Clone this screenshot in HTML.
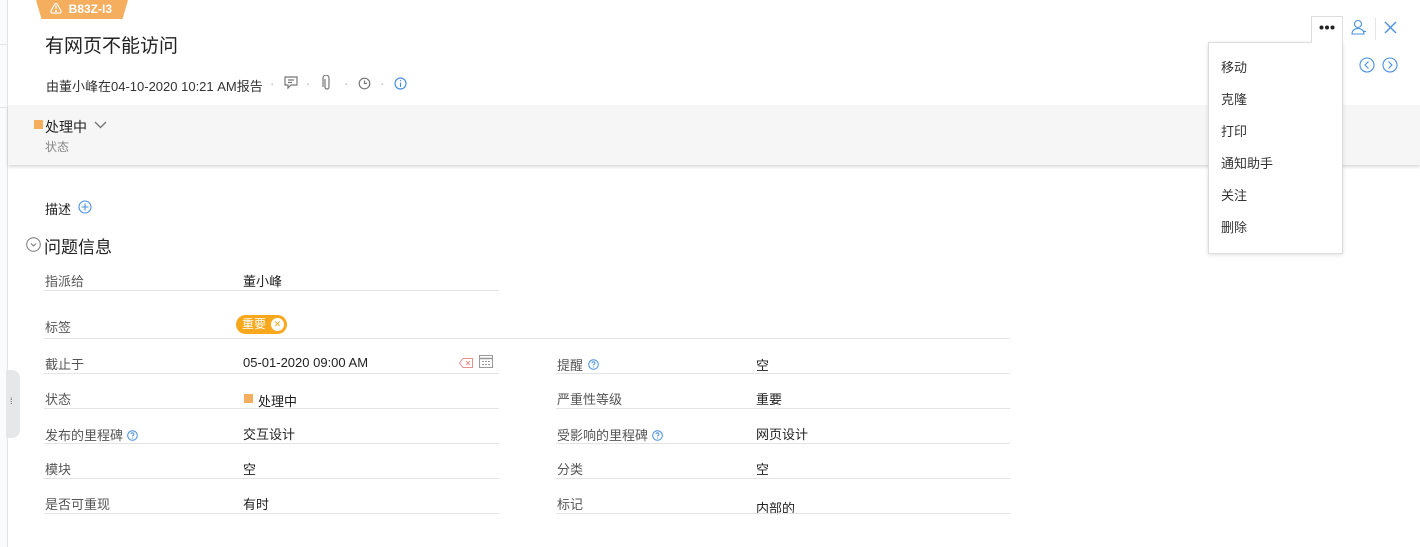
<!DOCTYPE html>
<html><head><meta charset="utf-8"><style>
*{margin:0;padding:0;box-sizing:border-box}
body{width:1420px;height:547px;overflow:hidden;background:#fff;font-family:"Liberation Sans","Noto Sans CJK SC",sans-serif;color:#333;position:relative;font-size:13px}
.a{position:absolute;white-space:nowrap}
.lbl{color:#555;font-size:13px}
.val{color:#222;font-size:13px}
.ln{position:absolute;height:1px;background:#e4e4e4}
.menu div{height:32px;line-height:32px;padding-left:12px;font-size:13px;color:#333}
svg{position:absolute}
</style></head><body>
<div class="a" style="left:0;top:0;width:8px;height:547px;background:#fafbfc;border-right:1px solid #e5e5e5"></div>
<div class="ln" style="left:0;top:44px;width:8px"></div>
<div class="ln" style="left:0;top:107px;width:8px"></div>
<div class="a" style="left:6px;top:370px;width:14px;height:68px;background:#e6e7e9;border-radius:0 8px 8px 0"></div>
<div class="a" style="left:10px;top:396px;font-size:9px;color:#555">⁞</div>

<div class="a" style="left:36px;top:0;width:92px;height:19px;background:#f5ad5e;clip-path:polygon(0 0,100% 0,94% 100%,6% 100%);color:#fff;font-weight:bold;font-size:12px;line-height:18px;padding-left:14px">⚠&nbsp; B83Z-I3</div>
<div class="a" style="left:45px;top:31px;font-size:19px;color:#222">有网页不能访问</div>
<div class="a" style="left:46px;top:76px;font-size:13px;color:#333">由董小峰在04-10-2020 10:21 AM报告</div>
<div class="a" style="left:270px;top:76px;color:#aaa">·</div>
<svg style="left:284px;top:76px" width="14" height="14" viewBox="0 0 14 14" fill="none" stroke="#777" stroke-width="1.2"><path d="M1 1h12v8H7l-3 3V9H1z M4 4h6 M4 6.5h4"/></svg>
<div class="a" style="left:306px;top:76px;color:#aaa">·</div>
<svg style="left:322px;top:75px" width="10" height="16" viewBox="0 0 10 16" fill="none" stroke="#777" stroke-width="1.2"><path d="M3 4v8a2 2 0 004 0V3a3 3 0 00-6 0v9"/></svg>
<div class="a" style="left:344px;top:76px;color:#aaa">·</div>
<svg style="left:358px;top:77px" width="13" height="13" viewBox="0 0 13 13" fill="none" stroke="#777" stroke-width="1.2"><circle cx="6.5" cy="6.5" r="5.3"/><path d="M6.5 3.5v3h2.5"/></svg>
<div class="a" style="left:380px;top:76px;color:#aaa">·</div>
<svg style="left:394px;top:77px" width="13" height="13" viewBox="0 0 13 13" fill="none" stroke="#4a90e2" stroke-width="1.2"><circle cx="6.5" cy="6.5" r="5.5"/><path d="M6.5 5.5v4.5 M6.5 3v1.2"/></svg>

<div class="a" style="left:8px;top:105px;width:1412px;height:60px;background:#f6f6f6;box-shadow:0 2px 3px rgba(0,0,0,.15)"></div>
<div class="a" style="left:34px;top:120px;width:9px;height:9px;background:#f5ad5e"></div>
<div class="a" style="left:45px;top:117px;font-size:14px;color:#222">处理中</div>
<svg style="left:94px;top:121px" width="13" height="8" viewBox="0 0 13 8" fill="none" stroke="#777" stroke-width="1.4"><path d="M1 1l5.5 5.5L12 1"/></svg>
<div class="a" style="left:45px;top:138px;font-size:12px;color:#888">状态</div>

<div class="a" style="left:45px;top:199px;font-size:13px;color:#222">描述</div>
<svg style="left:78px;top:200px" width="14" height="14" viewBox="0 0 14 14" fill="none" stroke="#4a90e2" stroke-width="1.1"><circle cx="7" cy="7" r="6"/><path d="M7 3.5v7M3.5 7h7"/></svg>
<svg style="left:26px;top:237px" width="15" height="15" viewBox="0 0 15 15" fill="none" stroke="#777" stroke-width="1"><circle cx="7.5" cy="7.5" r="6.8"/><path d="M5 6.5l2.5 2.5L10 6.5"/></svg>
<div class="a" style="left:44px;top:233px;font-size:17px;color:#222">问题信息</div>

<div class="a lbl" style="left:45px;top:271px">指派给</div><div class="a val" style="left:243px;top:271px">董小峰</div>
<div class="ln" style="left:44px;top:290px;width:455px"></div>
<div class="a lbl" style="left:45px;top:317px">标签</div>
<div class="a" style="left:236px;top:315px;width:51px;height:19px;background:#f8a81c;border-radius:10px;color:#fff;font-size:12px;line-height:19px;padding-left:6px">重要<span style="position:absolute;right:3px;top:3px;width:13px;height:13px;background:#fff;border-radius:50%;color:#f8a81c;font-size:9px;line-height:13px;text-align:center">✕</span></div>
<div class="ln" style="left:44px;top:338px;width:966px"></div>

<div class="a lbl" style="left:45px;top:354px">截止于</div><div class="a val" style="left:243px;top:355px">05-01-2020 09:00 AM</div>
<svg style="left:459px;top:358px" width="14" height="10" viewBox="0 0 14 10" fill="none" stroke="#e89090" stroke-width="1"><path d="M4 .5h9.5v9H4L.5 5z M7 3l4 4M11 3L7 7"/></svg>
<svg style="left:479px;top:355px" width="14" height="13" viewBox="0 0 14 13" fill="none" stroke="#999" stroke-width="1"><rect x=".5" y=".5" width="13" height="12"/><path d="M.5 3.5h13" stroke-width="1.5"/><path d="M3 6.5h2M6 6.5h2M9 6.5h2M3 9.5h2M6 9.5h2M9 9.5h2"/></svg>
<div class="ln" style="left:44px;top:373px;width:455px"></div>
<div class="a lbl" style="left:557px;top:355px">提醒</div>
<svg style="left:588px;top:359px" width="11" height="11" viewBox="0 0 11 11" fill="none" stroke="#4a90e2" stroke-width="1"><circle cx="5.5" cy="5.5" r="4.8"/><path d="M4 4.3a1.5 1.5 0 113 0c0 1-1.5 1-1.5 2.2M5.5 7.6v.9"/></svg>
<div class="a val" style="left:756px;top:355px">空</div>
<div class="ln" style="left:556px;top:373px;width:454px"></div>

<div class="a lbl" style="left:45px;top:389px">状态</div>
<div class="a" style="left:244px;top:394px;width:9px;height:9px;background:#f5ad5e"></div><div class="a val" style="left:258px;top:391px">处理中</div>
<div class="ln" style="left:44px;top:408px;width:455px"></div>
<div class="a lbl" style="left:557px;top:389px">严重性等级</div><div class="a val" style="left:756px;top:389px">重要</div>
<div class="ln" style="left:556px;top:408px;width:454px"></div>

<div class="a lbl" style="left:45px;top:425px">发布的里程碑</div>
<svg style="left:127px;top:430px" width="11" height="11" viewBox="0 0 11 11" fill="none" stroke="#4a90e2" stroke-width="1"><circle cx="5.5" cy="5.5" r="4.8"/><path d="M4 4.3a1.5 1.5 0 113 0c0 1-1.5 1-1.5 2.2M5.5 7.6v.9"/></svg>
<div class="a val" style="left:243px;top:424px">交互设计</div>
<div class="ln" style="left:44px;top:443px;width:455px"></div>
<div class="a lbl" style="left:557px;top:425px">受影响的里程碑</div>
<svg style="left:652px;top:430px" width="11" height="11" viewBox="0 0 11 11" fill="none" stroke="#4a90e2" stroke-width="1"><circle cx="5.5" cy="5.5" r="4.8"/><path d="M4 4.3a1.5 1.5 0 113 0c0 1-1.5 1-1.5 2.2M5.5 7.6v.9"/></svg>
<div class="a val" style="left:756px;top:424px">网页设计</div>
<div class="ln" style="left:556px;top:443px;width:454px"></div>

<div class="a lbl" style="left:45px;top:459px">模块</div><div class="a val" style="left:243px;top:459px">空</div>
<div class="ln" style="left:44px;top:478px;width:455px"></div>
<div class="a lbl" style="left:557px;top:459px">分类</div><div class="a val" style="left:756px;top:459px">空</div>
<div class="ln" style="left:556px;top:478px;width:454px"></div>

<div class="a lbl" style="left:45px;top:494px">是否可重现</div><div class="a val" style="left:243px;top:494px">有时</div>
<div class="ln" style="left:44px;top:513px;width:455px"></div>
<div class="a lbl" style="left:557px;top:494px">标记</div><div class="a val" style="left:756px;top:498px">内部的</div>
<div class="ln" style="left:556px;top:513px;width:454px"></div>

<div class="a" style="left:1311px;top:16px;width:32px;height:27px;border:1px solid #ddd;border-bottom:none;background:#fff;z-index:3"></div>
<svg style="left:1319px;top:25px;z-index:4" width="16" height="5" viewBox="0 0 16 5" fill="#222"><circle cx="2.5" cy="2.5" r="2"/><circle cx="8" cy="2.5" r="2"/><circle cx="13.5" cy="2.5" r="2"/></svg>
<svg style="left:1351px;top:19px" width="16" height="16" viewBox="0 0 16 16" fill="none" stroke="#4a90e2" stroke-width="1.1"><circle cx="7" cy="5" r="3.5"/><path d="M1 15c0-3.5 2.5-5.5 6-5.5s6 2 6 5.5z"/><path d="M12 12.5h3"/></svg>
<div class="a" style="left:1375px;top:18px;width:1px;height:22px;background:#e5e5e5"></div>
<svg style="left:1384px;top:21px" width="13" height="13" viewBox="0 0 13 13" stroke="#4a90e2" stroke-width="1.4"><path d="M1 1l11 11M12 1L1 12"/></svg>
<svg style="left:1359px;top:57px" width="16" height="16" viewBox="0 0 16 16" fill="none" stroke="#4a90e2" stroke-width="1.1"><circle cx="8" cy="8" r="7"/><path d="M9.5 4.5L6 8l3.5 3.5"/></svg>
<svg style="left:1382px;top:57px" width="16" height="16" viewBox="0 0 16 16" fill="none" stroke="#4a90e2" stroke-width="1.1"><circle cx="8" cy="8" r="7"/><path d="M6.5 4.5L10 8l-3.5 3.5"/></svg>
<div class="a menu" style="left:1208px;top:42px;width:135px;height:212px;background:#fff;border:1px solid #ddd;box-shadow:0 1px 4px rgba(0,0,0,.12);padding-top:9px;z-index:2">
<div>移动</div><div>克隆</div><div>打印</div><div>通知助手</div><div>关注</div><div>删除</div></div>
</body></html>
